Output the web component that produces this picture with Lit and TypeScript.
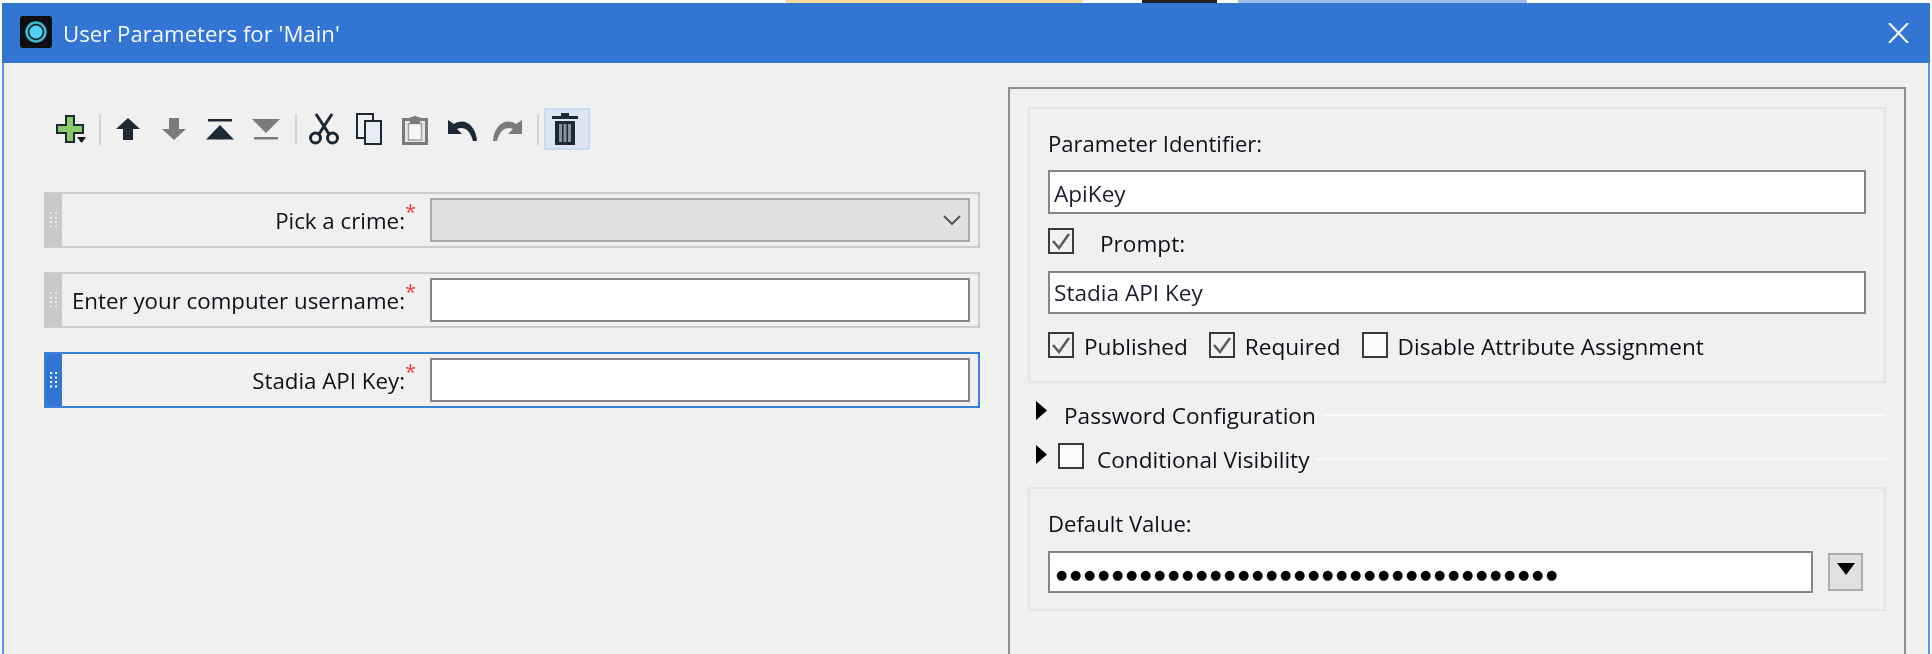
import { LitElement, html, css, svg } from "lit";
import { customElement } from "lit/decorators.js";

const D = "#1c2833";
const G = "#7b7b7b";

const tools = [
  { w: 30, h: 28, ml: 0, body: svg`<path d="M10 1h8v9h9v8h-9v9h-8v-9H1v-8h9z" fill="#88cc6a" stroke="${D}" stroke-width="2"/><path d="M21 22h9l-4.500 6z" fill="#111"/>` },
  { sep: true, ml: 13 },
  { w: 24, h: 22, ml: 15, body: svg`<path d="M12 0 24 11H17V22H7V11H0Z" fill="${D}"/>` },
  { w: 24, h: 22, ml: 22, body: svg`<path d="M12 22 24 11H17V0H7V11H0Z" fill="${G}"/>` },
  { w: 28, h: 21, ml: 20, body: svg`<path d="M2 0h24v2.500H2zM14 6 28 20.500H0Z" fill="${D}"/>` },
  { w: 28, h: 21, ml: 18, body: svg`<path d="M2 18h24v2.500H2zM14 14 28 0H0Z" fill="${G}"/>` },
  { sep: true, ml: 15 },
  { w: 30, h: 32, ml: 12, body: svg`<g fill="none" stroke="${D}" stroke-width="3"><circle cx="6.500" cy="25" r="5"/><circle cx="23.500" cy="25" r="5"/><path d="M10 21 23 1M20 21 7 1"/></g>` },
  { w: 26, h: 32, ml: 17, body: svg`<rect x="1" y="1" width="16" height="24" fill="#f0f0f0" stroke="${D}" stroke-width="2"/><rect x="9" y="8" width="16" height="23" fill="#e6edf3" stroke="${D}" stroke-width="2"/>` },
  { w: 26, h: 32, ml: 20, body: svg`<rect x="1.500" y="6.500" width="23" height="24" fill="#e6e6e6" stroke="${G}" stroke-width="3"/><rect x="6.500" y="10.500" width="13" height="16.500" fill="#f6f6f6" stroke="#a2a2a2" stroke-width="1.500"/><path d="M8 11V4h3a2.200 2.200 0 0 1 4 0h3v7z" fill="${G}"/>` },
  { w: 29, h: 23, ml: 20, body: svg`<path d="M0 2V16H14L9 11C15 8 22 11 25 23H29C28 8 17-1 6 6Z" fill="${D}"/>` },
  { w: 29, h: 23, ml: 16, body: svg`<path d="M29 2V16H15L20 11C14 8 7 11 4 23H0C1 8 12-1 23 6Z" fill="${G}"/>` },
  { sep: true, ml: 15 },
];

const rows = [
  { label: "Pick a crime:", select: true, active: false },
  { label: "Enter your computer username:", select: false, active: false },
  { label: "Stadia API Key:", select: false, active: true },
];

const check = html`<svg class="tick" viewBox="0 0 22 22"><path d="M3 11l6 7 10-14" fill="none" stroke="#5a5a5a" stroke-width="2.500"/></svg>`;
const tri = html`<svg class="tri" viewBox="0 0 11 19"><path d="M0 0 11 9.500 0 19Z" fill="#000"/></svg>`;

@customElement("app-root")
export class AppRoot extends LitElement {
  static styles = css`
    :host {
      display: block;
      width: 1932px;
      height: 654px;
      overflow: hidden;
      background: #fff;
      font-family: "Open Sans", "Noto Sans", sans-serif;
      font-size: 22.600px;
      color: #120e18;
    }
    .strip { display: flex; height: 3px; padding-left: 786px; }
    .strip i { display: block; }
    .s1 { width: 297px; background: #f6d995; }
    .s2 { width: 75px; margin-left: 59px; background: #222; }
    .s3 { width: 289px; margin-left: 21px; background: #9dbdea; }
    .win {
      margin-left: 2px;
      width: 1928px;
      height: 651px;
      display: flex;
      flex-direction: column;
      filter: blur(0.4px);
    }
    .title {
      height: 60px;
      flex: none;
      background: #3375d3;
      color: #f4f8fd;
      font-size: 22.200px;
      display: flex;
      align-items: center;
      padding: 0 21px 0 18px;
      gap: 11px;
    }
    .appicon { width: 32px; height: 32px; margin-top: -2px; flex: none; }
    .title span { flex: 1; }
    .close { width: 21px; height: 20px; flex: none; margin-top: -1px; }
    .body {
      flex: 1;
      min-height: 0;
      display: flex;
      gap: 28px;
      background: #f0f0f0;
      border-left: 2px solid #5a96e2;
      border-right: 2px solid #5a96e2;
      padding: 24px 22px 0 40px;
    }
    .left { width: 936px; flex: none; padding-top: 21px; }
    .toolbar { display: flex; align-items: center; height: 42px; padding-left: 12px; }
    .toolbar svg { display: block; flex: none; }
    .sep { width: 2px; height: 31px; background: #d4d4d4; flex: none; }
    .trash {
      width: 46px;
      height: 42px;
      margin-left: 5px;
      box-sizing: border-box;
      background: #dce6f2;
      border: 2px solid #c8dcf1;
      padding-right: 4px;
      display: flex;
      align-items: center;
      justify-content: center;
      flex: none;
    }
    .rows { display: flex; flex-direction: column; gap: 24px; margin-top: 42px; }
    .row {
      display: flex;
      align-items: stretch;
      height: 56px;
      box-sizing: border-box;
      border: 2px solid #cccccc;
    }
    .row.active { border-color: #3a80da; }
    .handle {
      width: 16px;
      flex: none;
      background: #c9c9c9;
      display: flex;
      align-items: center;
      justify-content: center;
    }
    .row.active .handle { background: #3375d3; }
    .handle svg { width: 8px; height: 16px; }
    .lab {
      flex: 1;
      display: flex;
      justify-content: flex-end;
      align-items: center;
      padding: 1px 14px 0 0;
      font-size: 22.300px;
    }
    .star { color: #e8413a; width: 11px; align-self: flex-start; line-height: 20px; margin-top: 7px; text-align: right; font-size: 20px; }
    .ctl {
      width: 540px;
      height: 44px;
      flex: none;
      align-self: center;
      margin-right: 8px;
      box-sizing: border-box;
      background: #fff;
      border: 2px solid #858585;
      display: flex;
      align-items: center;
      justify-content: flex-end;
      padding-right: 7px;
    }
    .ctl.sel { background: #e0e0e0; border-color: #a8a8a8; }
    .chev { width: 18px; height: 10px; }
    .frame {
      flex: 1;
      min-width: 0;
      height: 100%;
      box-sizing: border-box;
      border: solid #8a8f96;
      border-width: 2px 2px 0;
      padding: 18px 18px 0;
      margin-bottom: -10px;
    }
    .group { border: 2px solid #e4e4e4; padding: 19px 18px 23px; }
    .group.dv { margin-top: 13px; padding-bottom: 16px; }
    .lbl { line-height: 30px; height: 33px; font-size: 22.100px; }
    .inp {
      height: 44px;
      box-sizing: border-box;
      background: #fff;
      border: 2px solid #858585;
      padding: 2px 0 0 4px;
      display: flex;
      align-items: center;
      margin-top: 9px;
      color: #1c1c30;
    }
    .inp.short { height: 43px; margin-top: 17px; padding-top: 0; }
    .ckrow { display: flex; align-items: center; height: 26px; margin-top: 14px; }
    .ckrow.last { margin-top: 18px; }
    .ckrow.last span { padding-top: 2px; }
    .cb {
      width: 26px;
      height: 26px;
      box-sizing: border-box;
      border: 2px solid #3a3a3a;
      background: #f2f2f2;
      flex: none;
    }
    .cb.off { background: #fbfbfb; }
    .tick { display: block; width: 22px; height: 22px; }
    .t1 { margin-left: 26px; padding-top: 5px; }
    .t2 { margin-left: 10px; }
    .cb2 { margin-left: 21px; }
    .cb3 { margin-left: 21px; }
    .coll {
      display: flex;
      align-items: center;
      height: 30px;
      padding-left: 8px;
    }
    .coll.a { margin-top: 17px; }
    .coll.b { margin-top: 14px; }
    .tri { width: 11px; height: 19px; flex: none; margin-top: -9px; }
    .coll .line { flex: 1; height: 2px; background: #fafafa; margin-left: 6px; }
    .coll.a .name { margin-left: 17px; }
    .coll.b .cb { margin-left: 11px; margin-top: -6px; }
    .coll.b .name { margin-left: 13px; }
    .dvrow { display: flex; align-items: center; margin-top: 10px; }
    .inp.pw {
      flex: 1;
      height: 42px;
      margin-top: 0;
      padding: 5px 0 0 6px;
      font-family: "DejaVu Sans", sans-serif;
      font-size: 13px;
      letter-spacing: 2.660px;
      color: #000;
    }
    .drop {
      width: 35px;
      height: 38px;
      margin: 0 3px 0 15px;
      box-sizing: border-box;
      background: #e1e1e1;
      border: 2px solid #adadad;
      display: flex;
      justify-content: center;
      padding-top: 8px;
    }
    .drop svg { width: 18px; height: 12px; }
  `;

  render() {
    return html`
      <div class="strip"><i class="s1"></i><i class="s2"></i><i class="s3"></i></div>
      <div class="win">
        <div class="title">
          <svg class="appicon" viewBox="0 0 32 32">
            <rect width="32" height="32" rx="3" fill="#0d0f11"/>
            <circle cx="16" cy="16" r="9.500" fill="#10262c" stroke="#41b9d2" stroke-width="2.500"/>
            <circle cx="16" cy="16" r="6.500" fill="#4fd2f4"/>
          </svg>
          <span>User Parameters for 'Main'</span>
          <svg class="close" viewBox="0 0 21 20"><path d="M1 0 20 20M20 0 1 20" stroke="#fff" stroke-width="2" fill="none"/></svg>
        </div>
        <div class="body">
          <div class="left">
            <div class="toolbar">
              ${tools.map((t) =>
                t.sep
                  ? html`<div class="sep" style="margin-left:${t.ml}px"></div>`
                  : html`<svg width=${t.w!} height=${t.h!} viewBox="0 0 ${t.w} ${t.h}" style="margin-left:${t.ml}px">${t.body}</svg>`
              )}
              <div class="trash">
                <svg width="26" height="32" viewBox="0 0 26 32">
                  <path d="M9 0h8v3h9v3H0V3h9zM3 8h20v24H3z" fill="${D}"/>
                  <path d="M7 11h3v18H7zM11.500 11h3v18h-3zM16 11h3v18h-3z" fill="#8a9099"/>
                </svg>
              </div>
            </div>
            <div class="rows">
              ${rows.map(
                (r) => html`
                  <div class="row ${r.active ? "active" : ""}">
                    <div class="handle">
                      <svg viewBox="0 0 8 16" fill="${r.active ? "#fff" : "#e8e8e8"}">
                        <path d="M0 0h2v2H0zM5 0h2v2H5zM0 4.500h2v2H0zM5 4.500h2v2H5zM0 9h2v2H0zM5 9h2v2H5zM0 13.500h2v2H0zM5 13.500h2v2H5z"/>
                      </svg>
                    </div>
                    <div class="lab"><span>${r.label}</span><span class="star">*</span></div>
                    <div class="ctl ${r.select ? "sel" : ""}">
                      ${r.select
                        ? html`<svg class="chev" viewBox="0 0 18 10"><path d="M1 1l8 8 8-8" fill="none" stroke="#555" stroke-width="2"/></svg>`
                        : ""}
                    </div>
                  </div>
                `
              )}
            </div>
          </div>
          <div class="frame">
            <div class="group">
              <div class="lbl">Parameter Identifier:</div>
              <div class="inp">ApiKey</div>
              <div class="ckrow">
                <div class="cb">${check}</div>
                <span class="t1">Prompt:</span>
              </div>
              <div class="inp short">Stadia API Key</div>
              <div class="ckrow last">
                <div class="cb">${check}</div>
                <span class="t2">Published</span>
                <div class="cb cb2">${check}</div>
                <span class="t2">Required</span>
                <div class="cb off cb3"></div>
                <span class="t2">Disable Attribute Assignment</span>
              </div>
            </div>
            <div class="coll a">${tri}<span class="name">Password Configuration</span><div class="line"></div></div>
            <div class="coll b">${tri}<div class="cb off"></div><span class="name">Conditional Visibility</span><div class="line"></div></div>
            <div class="group dv">
              <div class="lbl">Default Value:</div>
              <div class="dvrow">
                <div class="inp pw">${"●".repeat(36)}</div>
                <div class="drop"><svg viewBox="0 0 18 12"><path d="M0 0h18L9 12z" fill="#000"/></svg></div>
              </div>
            </div>
          </div>
        </div>
      </div>
    `;
  }
}
